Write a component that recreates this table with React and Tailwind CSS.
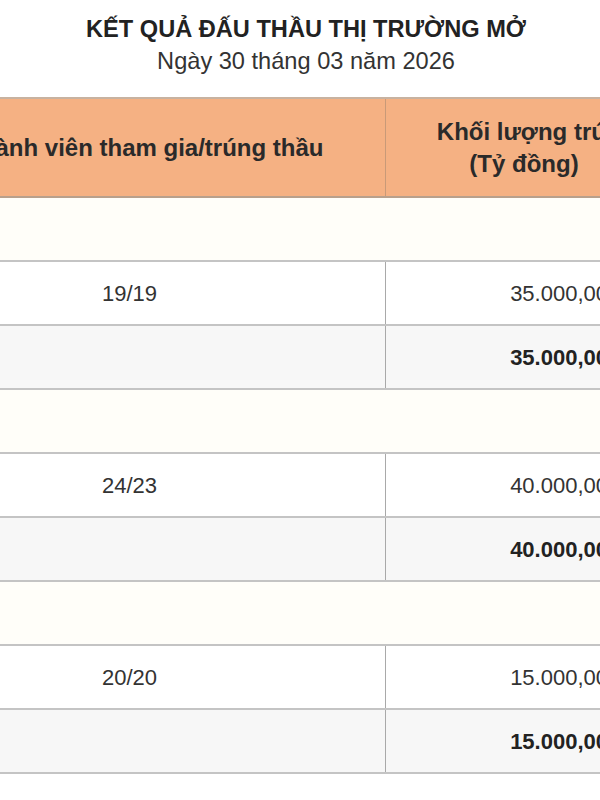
import React from 'react';

const groups = [
  { ratio: '19/19', amount: '35.000,00' },
  { ratio: '24/23', amount: '40.000,00' },
  { ratio: '20/20', amount: '15.000,00' },
];

function SectionRow() {
  return <div className="h-[64px] bg-[#fffef9] border-b-2 border-[#c4c4c4]" />;
}

function DataRow({ left, right, bold, shaded }) {
  return (
    <div
      className={`flex h-[64px] border-b-2 border-[#c4c4c4] ${shaded ? 'bg-[#f7f7f7]' : 'bg-white'} ${bold ? 'font-bold text-[#222]' : 'text-[#333]'}`}
    >
      <div className="w-[512px] shrink-0 flex items-center justify-center border-r border-[#a9a9a9]">
        {left}
      </div>
      <div className="w-[276px] shrink-0 flex items-center justify-end pr-[54px]">{right}</div>
    </div>
  );
}

export default function App() {
  return (
    <div className="w-[600px] h-[800px] overflow-hidden bg-white font-['Liberation_Sans',Arial,sans-serif]">
      <div className="pt-[13px] pb-[20px] pl-[12px] text-center">
        <h1 className="text-[23.6px] leading-[32px] font-bold text-[#222]">
          KẾT QUẢ ĐẤU THẦU THỊ TRƯỜNG MỞ
        </h1>
        <p className="text-[23.6px] leading-[32px] text-[#333]">Ngày 30 tháng 03 năm 2026</p>
      </div>

      <div className="ml-[-126px] w-[788px] text-[22px]">
        <div className="flex h-[101px] bg-[#f5b183] border-t-2 border-b-2 border-t-[#c8b2a0] border-b-[#b8a08c] text-[24px] font-bold text-[#2a2a2a] leading-[32px]">
          <div className="w-[512px] shrink-0 flex items-center justify-center border-r border-[#c99a78] whitespace-nowrap">
            Số thành viên tham gia/trúng thầu
          </div>
          <div className="w-[276px] shrink-0 flex flex-col items-center justify-center whitespace-nowrap">
            <span className="pl-[24px]">Khối lượng trúng</span>
            <span>(Tỷ đồng)</span>
          </div>
        </div>

        {groups.map((g) => (
          <React.Fragment key={g.ratio}>
            <SectionRow />
            <DataRow left={g.ratio} right={g.amount} />
            <DataRow left="" right={g.amount} bold shaded />
          </React.Fragment>
        ))}
      </div>
    </div>
  );
}
